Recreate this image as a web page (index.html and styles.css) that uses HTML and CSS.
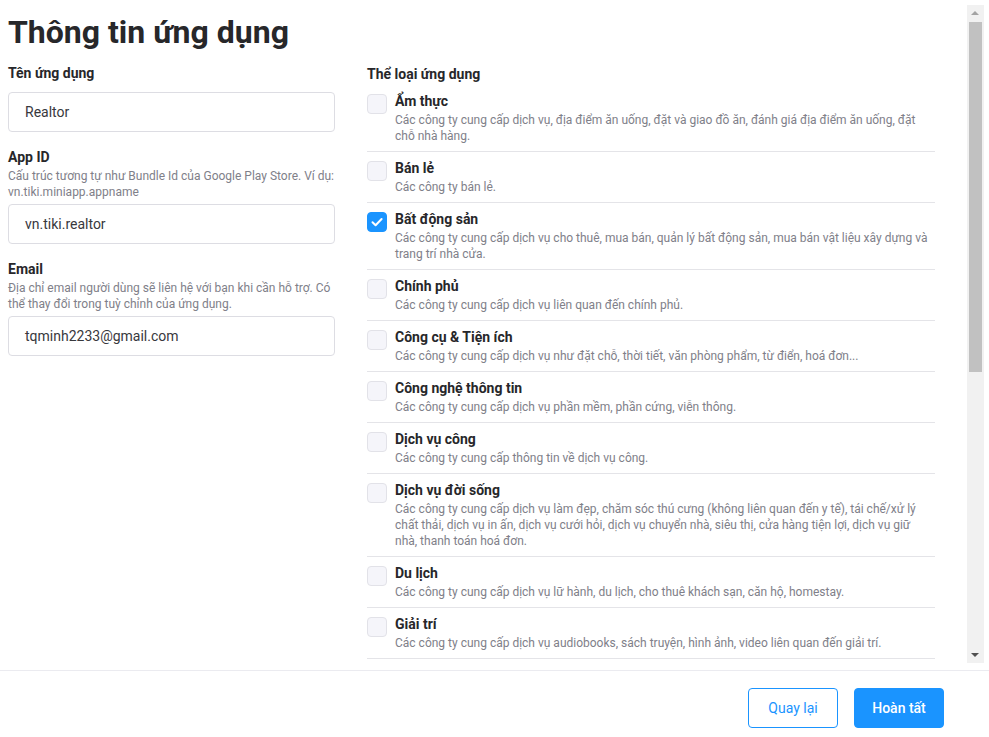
FILE: index.html
```html
<!DOCTYPE html>
<html lang="vi">
<head>
<meta charset="utf-8">
<title>Thông tin ứng dụng</title>
<link rel="stylesheet" href="styles.css">
</head>
<body>
<div class="page">
  <div class="content">
    <h1 class="title">Thông tin ứng dụng</h1>
    <div class="grid">
      <div class="left">
        <div class="field">
          <div class="label label-plain">Tên ứng dụng</div>
          <div class="input">Realtor</div>
        </div>
        <div class="field">
          <div class="label">App ID</div>
          <div class="desc">Cấu trúc tương tự như Bundle Id của Google Play Store. Ví dụ: vn.tiki.miniapp.appname</div>
          <div class="input">vn.tiki.realtor</div>
        </div>
        <div class="field">
          <div class="label">Email</div>
          <div class="desc">Địa chỉ email người dùng sẽ liên hệ với bạn khi cần hỗ trợ. Có thể thay đổi trong tuỳ chỉnh của ứng dụng.</div>
          <div class="input">tqminh2233@gmail.com</div>
        </div>
      </div>
      <div class="right">
        <div class="label cat-head">Thể loại ứng dụng</div>
        <ul class="cats">
          <li class="cat"><span class="box"></span><div class="cat-text"><div class="cat-title">Ẩm thực</div><div class="cat-desc">Các công ty cung cấp dịch vụ, địa điểm ăn uống, đặt và giao đồ ăn, đánh giá địa điểm ăn uống, đặt chỗ nhà hàng.</div></div></li>
          <li class="cat"><span class="box"></span><div class="cat-text"><div class="cat-title">Bán lẻ</div><div class="cat-desc">Các công ty bán lẻ.</div></div></li>
          <li class="cat"><span class="box checked"><svg viewBox="0 0 20 20" width="20" height="20"><path d="M5.5 10.2 L8.6 13.2 L14.6 7" fill="none" stroke="#fff" stroke-width="2" stroke-linecap="round" stroke-linejoin="round"/></svg></span><div class="cat-text"><div class="cat-title">Bất động sản</div><div class="cat-desc">Các công ty cung cấp dịch vụ cho thuê, mua bán, quản lý bất động sản, mua bán vật liệu xây dựng và trang trí nhà cửa.</div></div></li>
          <li class="cat"><span class="box"></span><div class="cat-text"><div class="cat-title">Chính phủ</div><div class="cat-desc">Các công ty cung cấp dịch vụ liên quan đến chính phủ.</div></div></li>
          <li class="cat"><span class="box"></span><div class="cat-text"><div class="cat-title">Công cụ &amp; Tiện ích</div><div class="cat-desc">Các công ty cung cấp dịch vụ như đặt chỗ, thời tiết, văn phòng phẩm, từ điển, hoá đơn...</div></div></li>
          <li class="cat"><span class="box"></span><div class="cat-text"><div class="cat-title">Công nghệ thông tin</div><div class="cat-desc">Các công ty cung cấp dịch vụ phần mềm, phần cứng, viễn thông.</div></div></li>
          <li class="cat"><span class="box"></span><div class="cat-text"><div class="cat-title">Dịch vụ công</div><div class="cat-desc">Các công ty cung cấp thông tin về dịch vụ công.</div></div></li>
          <li class="cat"><span class="box"></span><div class="cat-text"><div class="cat-title">Dịch vụ đời sống</div><div class="cat-desc">Các công ty cung cấp dịch vụ làm đẹp, chăm sóc thú cưng (không liên quan đến y tế), tái chế/xử lý chất thải, dịch vụ in ấn, dịch vụ cưới hỏi, dịch vụ chuyển nhà, siêu thị, cửa hàng tiện lợi, dịch vụ giữ nhà, thanh toán hoá đơn.</div></div></li>
          <li class="cat"><span class="box"></span><div class="cat-text"><div class="cat-title">Du lịch</div><div class="cat-desc">Các công ty cung cấp dịch vụ lữ hành, du lịch, cho thuê khách sạn, căn hộ, homestay.</div></div></li>
          <li class="cat"><span class="box"></span><div class="cat-text"><div class="cat-title">Giải trí</div><div class="cat-desc">Các công ty cung cấp dịch vụ audiobooks, sách truyện, hình ảnh, video liên quan đến giải trí.</div></div></li>
        </ul>
      </div>
    </div>
    <div class="scrollbar">
      <div class="sb-btn sb-up"></div>
      <div class="sb-thumb"></div>
      <div class="sb-rest"></div>
      <div class="sb-btn sb-down"></div>
    </div>
  </div>
  <div class="footer">
    <button class="btn btn-outline">Quay lại</button>
    <button class="btn btn-primary">Hoàn tất</button>
  </div>
</div>
</body>
</html>
```

FILE: styles.css
```css
* { box-sizing: border-box; }
html, body { margin: 0; padding: 0; background: #fff; }
body {
  font-family: Roboto, "Noto Sans", "Liberation Sans", sans-serif;
  color: #27272a;
}
.page {
  width: 989px;
  height: 737px;
  display: flex;
  flex-direction: column;
}
.content {
  position: relative;
  height: 670px;
  overflow: hidden;
  padding: 0 8px;
  flex: none;
}
.title {
  margin: 0;
  padding-top: 10px;
  font-size: 32px;
  line-height: 44px;
  font-weight: 700;
  color: #27272a;
}
.grid {
  display: grid;
  grid-template-columns: 327px 568px;
  column-gap: 32px;
  margin-top: 9px;
}
.field { margin-bottom: 15px; }
.label {
  font-size: 14px;
  line-height: 20px;
  font-weight: 700;
  color: #27272a;
}
.field .label { margin-bottom: 1px; }
.field .label-plain { margin-bottom: 9px; }
.desc {
  font-size: 12px;
  line-height: 16px;
  color: #808089;
  margin-bottom: 4px;
}
.input {
  height: 40px;
  border: 1px solid #dddde3;
  border-radius: 4px;
  padding: 0 16px;
  display: flex;
  align-items: center;
  font-size: 14px;
  color: #38383d;
}
.cat-head { margin-top: 1px; margin-bottom: 1px; }
.cats { list-style: none; margin: 0; padding: 0; }
.cat {
  display: flex;
  gap: 8px;
  padding: 5px 0 7px;
  border-bottom: 1px solid #e4e4e8;
}
.box {
  flex: none;
  width: 20px;
  height: 20px;
  margin-top: 4px;
  border: 1px solid #e2e2e8;
  border-radius: 4px;
  background: #f5f5fa;
  display: flex;
}
.box.checked {
  background: #1a94ff;
  border-color: #1a94ff;
}
.box svg { display: block; margin: -1px; }
.cat-title {
  font-size: 14px;
  line-height: 22px;
  font-weight: 700;
  color: #27272a;
}
.cat-desc {
  font-size: 12px;
  line-height: 16px;
  color: #808089;
}
.scrollbar {
  position: absolute;
  left: 967px;
  top: 5px;
  width: 17px;
  height: 658px;
  background: #f1f1f1;
  display: flex;
  flex-direction: column;
}
.sb-btn {
  height: 17px;
  flex: none;
  position: relative;
}
.sb-btn::after {
  content: "";
  position: absolute;
  left: 4px;
  width: 0; height: 0;
  border-left: 4px solid transparent;
  border-right: 4px solid transparent;
}
.sb-up::after { top: 6px; border-bottom: 4px solid #a3a3a3; }
.sb-down::after { top: 7px; border-top: 4px solid #505050; }
.sb-thumb {
  flex: none;
  height: 350px;
  margin: 0 2px;
  background: #c1c1c1;
}
.sb-rest { flex: 1; }
.footer {
  flex: 1;
  border-top: 1px solid #ebebf0;
  display: flex;
  justify-content: flex-end;
  align-items: flex-start;
  gap: 16px;
  padding: 17px 45px 0 0;
}
.btn {
  width: 90px;
  height: 40px;
  border-radius: 4px;
  font-family: Roboto, "Noto Sans", "Liberation Sans", sans-serif;
  font-size: 14px;
  font-weight: 500;
  cursor: pointer;
}
.btn-outline {
  background: #fff;
  border: 1px solid #1a94ff;
  color: #1a94ff;
  font-weight: 400;
}
.btn-primary {
  background: #1a94ff;
  border: 1px solid #1a94ff;
  color: #fff;
}
```
